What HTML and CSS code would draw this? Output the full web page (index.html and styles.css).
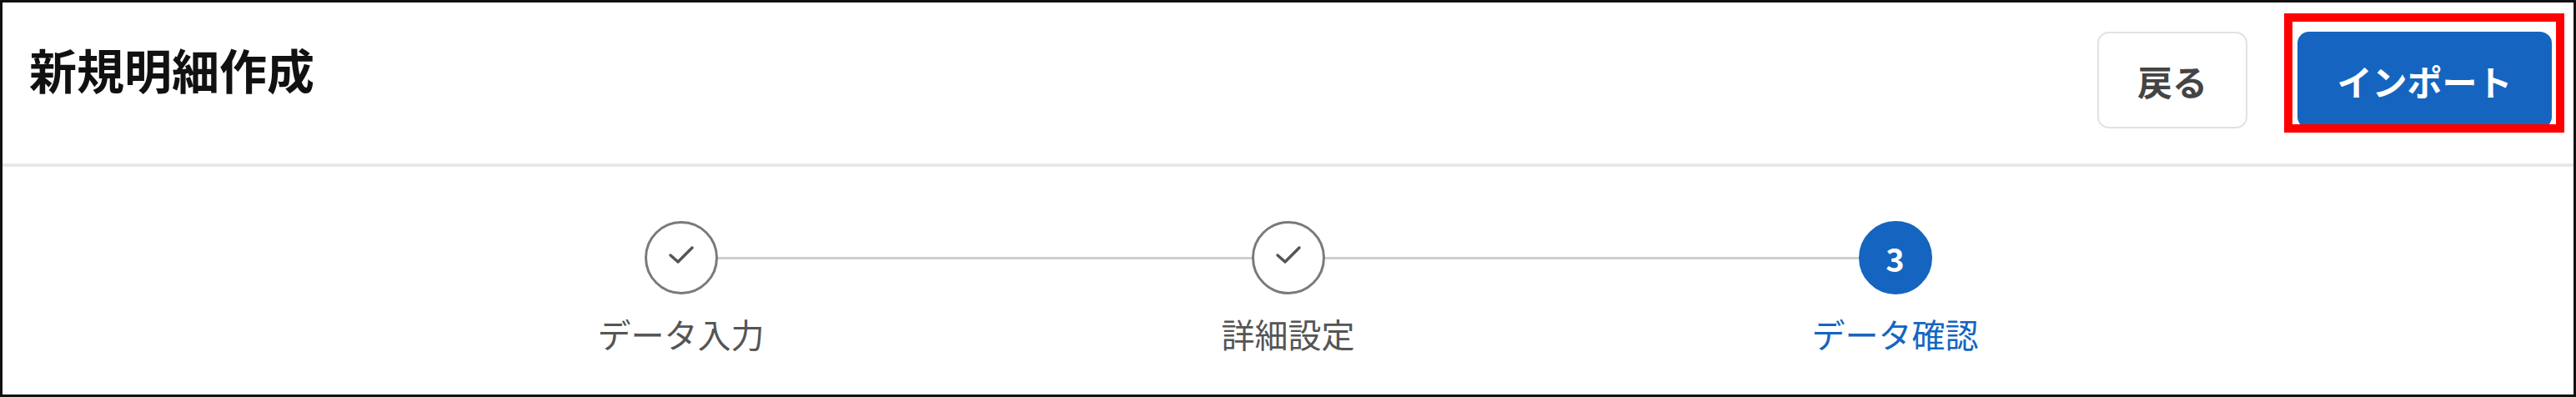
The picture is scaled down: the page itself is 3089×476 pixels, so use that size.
FILE: index.html
```html
<!DOCTYPE html>
<html lang="ja">
<head>
    <meta charset="utf-8">
    <title>新規明細作成</title>
    <link rel="stylesheet" href="styles.css">
</head>
<body>
    <div class="frame">
        <div class="page-header">
            <h1 class="page-title">新規明細作成</h1>
            <div class="actions">
                <button class="btn btn-back">戻る</button>
                <div class="highlight-wrap">
                    <button class="btn btn-import">インポート</button>
                    <span class="highlight"></span>
                </div>
            </div>
        </div>
        <div class="stepper">
            <div class="step done">
                <div class="step-circle">
                    <svg class="check" width="34" height="26" viewBox="0 0 34 26"><path d="M4 13 L13 21 L30 4" fill="none" stroke="#555" stroke-width="3.5" stroke-linecap="round" stroke-linejoin="round"/></svg>
                </div>
                <div class="step-label">データ入力</div>
            </div>
            <div class="step done">
                <div class="step-circle">
                    <svg class="check" width="34" height="26" viewBox="0 0 34 26"><path d="M4 13 L13 21 L30 4" fill="none" stroke="#555" stroke-width="3.5" stroke-linecap="round" stroke-linejoin="round"/></svg>
                </div>
                <div class="step-label">詳細設定</div>
            </div>
            <div class="step active">
                <div class="step-circle">3</div>
                <div class="step-label">データ確認</div>
            </div>
        </div>
    </div>
</body>
</html>
```

FILE: styles.css
```css
body{
    margin: 0;
    background-color: #fff;
    font-family: "Noto Sans CJK JP", "Noto Sans", sans-serif;
}
.frame{
    box-sizing: border-box;
    width: 3089px;
    height: 476px;
    border: 3px solid #111;
    background-color: #fff;
}
.page-header{
    box-sizing: border-box;
    height: 197px;
    display: flex;
    justify-content: space-between;
    align-items: flex-start;
    padding: 35px 26px 0 32px;
    border-bottom: 4px solid #e8e8e8;
}
.page-title{
    margin: 4px 0 0;
    font-size: 57px;
    line-height: 80px;
    font-weight: 700;
    color: #111;
}
.actions{
    display: flex;
    gap: 60px;
}
.btn{
    box-sizing: border-box;
    height: 116px;
    border-radius: 14px;
    font-family: inherit;
    font-size: 42px;
    font-weight: 700;
    cursor: pointer;
}
.btn-back{
    width: 180px;
    background-color: #fff;
    border: 2px solid #e2e2e2;
    color: #444;
}
.btn-import{
    width: 305px;
    background-color: #1565c0;
    border: none;
    color: #fff;
}
.highlight-wrap{
    position: relative;
    display: flex;
}
.highlight{
    position: absolute;
    top: -22px;
    left: -16px;
    right: -15px;
    bottom: -5px;
    border: 10px solid #f00;
}
.stepper{
    width: 2184px;
    margin: 0 auto;
    padding-top: 65px;
    display: grid;
    grid-template-columns: repeat(3, 1fr);
}
.step{
    position: relative;
    display: flex;
    flex-direction: column;
    align-items: center;
}
/* connector from the previous step's circle */
.step + .step::before{
    content: "";
    position: absolute;
    top: 43px;
    left: -50%;
    right: 50%;
    height: 3px;
    background-color: #cfcfcf;
}
.step-circle{
    position: relative;
    z-index: 1;
    box-sizing: border-box;
    width: 88px;
    height: 88px;
    border-radius: 50%;
    border: 3px solid #7a7a7a;
    background-color: #fff;
    display: flex;
    align-items: center;
    justify-content: center;
}
.check{
    margin-top: -6px;
}
.step.active .step-circle{
    border-color: #1565c0;
    background-color: #1565c0;
    color: #fff;
    font-size: 38px;
    font-weight: 700;
}
.step-label{
    margin-top: 23px;
    font-size: 40px;
    line-height: 48px;
    color: #555;
}
.step.active .step-label{
    color: #1565c0;
}
```
